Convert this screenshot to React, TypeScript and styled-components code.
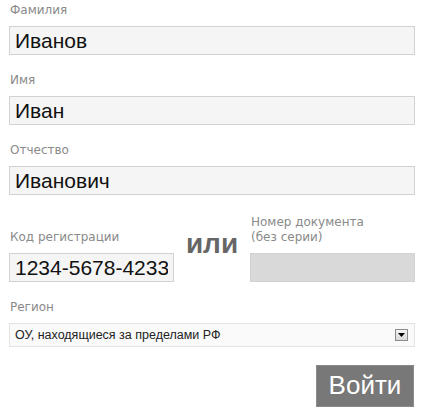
import React from 'react';
import styled, { createGlobalStyle } from 'styled-components';

const GlobalStyle = createGlobalStyle`
  body {
    margin: 0;
    background: #fff;
    font-family: "DejaVu Sans", Verdana, sans-serif;
  }
`

const Form = styled.form`
  width: 406px;
  padding: 3px 0 0 9px;
  display: flex;
  flex-direction: column;
`

const Field = styled.div`
  display: flex;
  flex-direction: column;
  margin-bottom: 18px;
`

const Label = styled.label`
  font-size: 12px;
  line-height: 15px;
  color: #8a8a8a;
  padding-left: 1px;
  margin-bottom: 8px;
`

const TextInput = styled.input<{ $disabled?: boolean }>`
  box-sizing: border-box;
  width: 100%;
  height: 29px;
  margin: 0;
  padding: 0 5px;
  border: 1px solid #d2d2d2;
  background: ${p => (p.$disabled ? '#d9d9d9' : '#f5f5f5')};
  font-family: "Liberation Sans", Arial, sans-serif;
  font-size: 21px;
  color: #111;
  outline: none;
`

const ChoiceRow = styled.div`
  display: grid;
  grid-template-columns: 165px 1fr 165px;
  align-items: end;
  margin: 2px 0 18px;
`

const Column = styled.div`
  display: flex;
  flex-direction: column;
`

const Or = styled.span`
  justify-self: center;
  font-family: "Liberation Sans", Arial, sans-serif;
  font-weight: bold;
  font-size: 28px;
  line-height: 28px;
  color: #666;
  margin-bottom: 24px;
`

const Select = styled.div`
  box-sizing: border-box;
  height: 24px;
  display: flex;
  align-items: center;
  justify-content: space-between;
  padding: 0 6px 0 5px;
  border: 1px solid #e3e3e3;
  background: #fafafa;
  font-family: "Liberation Sans", Arial, sans-serif;
  font-size: 12.5px;
  color: #222;
`

const Arrow = styled.span`
  box-sizing: border-box;
  width: 13px;
  height: 12px;
  display: flex;
  align-items: center;
  justify-content: center;
  border: 1px solid #8c8c8c;
  background: linear-gradient(#f4f4f4, #d8d8d8);
`

const Actions = styled.div`
  display: flex;
  justify-content: flex-end;
`

const Submit = styled.button`
  width: 98px;
  height: 42px;
  margin: 0 1px 0 0;
  padding: 0 0 2px;
  border: 1px solid #8a8a8a;
  background: #787878;
  color: #fff;
  font-family: "Liberation Sans", Arial, sans-serif;
  font-size: 26px;
  cursor: pointer;
`

export default function App() {
  return (
    <>
      <GlobalStyle />
      <Form onSubmit={e => e.preventDefault()}>
        <Field>
          <Label>Фамилия</Label>
          <TextInput defaultValue="Иванов" />
        </Field>
        <Field>
          <Label>Имя</Label>
          <TextInput defaultValue="Иван" />
        </Field>
        <Field>
          <Label>Отчество</Label>
          <TextInput defaultValue="Иванович" />
        </Field>
        <ChoiceRow>
          <Column>
            <Label>Код регистрации</Label>
            <TextInput defaultValue="1234-5678-4233" />
          </Column>
          <Or>или</Or>
          <Column>
            <Label>Номер документа<br />(без серии)</Label>
            <TextInput $disabled disabled />
          </Column>
        </ChoiceRow>
        <Field>
          <Label>Регион</Label>
          <Select>
            ОУ, находящиеся за пределами РФ
            <Arrow>
              <svg width="7" height="4" viewBox="0 0 7 4">
                <path d="M0 0h7L3.5 4z" fill="#000" />
              </svg>
            </Arrow>
          </Select>
        </Field>
        <Actions>
          <Submit type="submit">Войти</Submit>
        </Actions>
      </Form>
    </>
  );
}
